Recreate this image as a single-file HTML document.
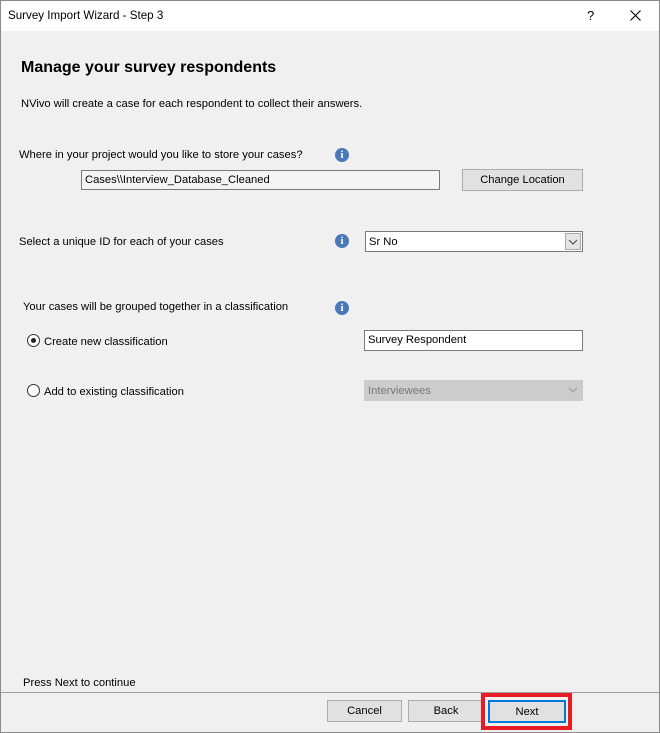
<!DOCTYPE html>
<html><head><style>
body{margin:0;width:660px;height:733px;background:#f0f0f0;font-family:"Liberation Sans",sans-serif;font-size:11.2px;color:#000;position:relative;overflow:hidden}
.a{position:absolute;white-space:nowrap}
.t{position:absolute;white-space:nowrap;margin-top:1px}
.win{position:absolute;left:0;top:0;width:658px;height:731px;border:1px solid #8a8a8a}
.title{position:absolute;left:1px;top:1px;width:658px;height:30px;background:#fff}
.info{position:absolute;width:14px;height:14px;border-radius:50%;background:#4a78b8;color:#fff;font:bold 11px "Liberation Serif",serif;text-align:center;line-height:14px}
.box{position:absolute;background:#fff;border:1px solid #7a7a7a;box-sizing:border-box;padding-left:3px;line-height:19px}
.btn{position:absolute;background:#e1e1e1;border:1px solid #adadad;box-sizing:border-box;text-align:center;line-height:21px}
.radio{position:absolute;width:13px;height:13px;border:1px solid #333;border-radius:50%;background:#fff;box-sizing:border-box}
</style></head><body>
<div class="win"></div>
<div class="title"></div>
<div class="a" style="left:8px;top:9px;font-size:11.6px">Survey Import Wizard - Step 3</div>
<div class="a" style="left:587px;top:8px;font-size:13px">?</div>
<svg class="a" style="left:630px;top:10px" width="11" height="11"><path d="M0.5 0.5L10.5 10.5M10.5 0.5L0.5 10.5" stroke="#000" stroke-width="1.1"/></svg>
<div class="a" style="left:21px;top:59px;font-size:16px;font-weight:bold">Manage your survey respondents</div>
<div class="t" style="left:21px;top:97px">NVivo will create a case for each respondent to collect their answers.</div>
<div class="t" style="left:19px;top:148px">Where in your project would you like to store your cases?</div>
<div class="info" style="left:335px;top:148px">i</div>
<div class="box" style="left:81px;top:170px;width:359px;height:20px;background:#f4f4f4">Cases\\Interview_Database_Cleaned</div>
<div class="btn" style="left:462px;top:169px;width:121px;height:22px">Change Location</div>
<div class="t" style="left:19px;top:235px">Select a unique ID for each of your cases</div>
<div class="info" style="left:335px;top:234px">i</div>
<div class="box" style="left:365px;top:231px;width:218px;height:21px;line-height:20px">Sr No</div>
<div class="a" style="left:565px;top:233px;width:16px;height:17px;background:#e5e5e5;border:1px solid #aaa;box-sizing:border-box"><svg width="14" height="15"><path d="M3 6l4 4 4-4" stroke="#444" fill="none"/></svg></div>
<div class="t" style="left:23px;top:300px">Your cases will be grouped together in a classification</div>
<div class="info" style="left:335px;top:301px">i</div>
<div class="radio" style="left:27px;top:334px"><div style="position:absolute;left:3px;top:3px;width:5px;height:5px;border-radius:50%;background:#222"></div></div>
<div class="t" style="left:44px;top:335px">Create new classification</div>
<div class="box" style="left:364px;top:330px;width:219px;height:21px">Survey Respondent</div>
<div class="radio" style="left:27px;top:384px"></div>
<div class="t" style="left:44px;top:385px">Add to existing classification</div>
<div class="box" style="left:364px;top:380px;width:219px;height:21px;background:#ccc;border-color:#ccc;color:#777;line-height:20px">Interviewees<svg style="position:absolute;right:4px;top:5px" width="10" height="8"><path d="M1 2l4 4 4-4" stroke="#999" fill="none"/></svg></div>
<div class="t" style="left:23px;top:676px">Press Next to continue</div>
<div class="a" style="left:1px;top:692px;width:658px;height:1px;background:#a0a0a0"></div>
<div class="btn" style="left:327px;top:700px;width:75px;height:22px">Cancel</div>
<div class="btn" style="left:408px;top:700px;width:76px;height:22px">Back</div>
<div class="a" style="left:481px;top:693px;width:91px;height:37px;border:4px solid #e81c24;box-sizing:border-box"></div>
<div class="btn" style="left:488px;top:700px;width:78px;height:23px;border:2px solid #0078d7;line-height:20px">Next</div>
</body></html>
